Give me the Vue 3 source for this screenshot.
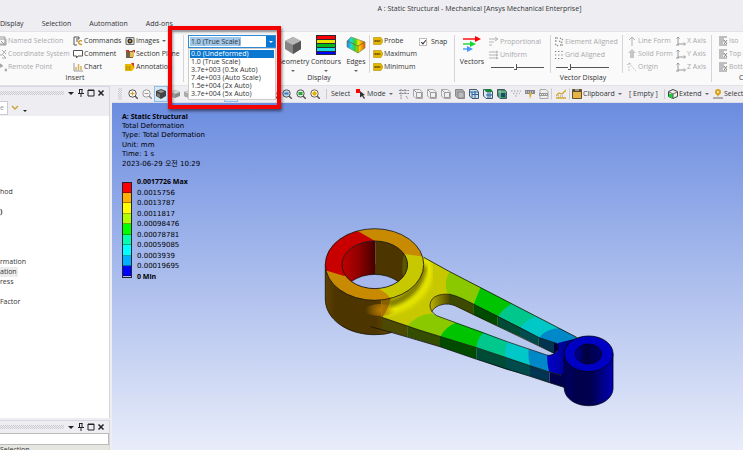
<script setup>
import { ref } from 'vue'

const scale = ref('1.0 (True Scale)')
const snap = ref(true)
const vectorLength = ref(46)
const gridSize = ref(24)

const tabs = ['Display', 'Selection', 'Automation', 'Add-ons']
const scaleOptions = [
  '0.0 (Undeformed)',
  '1.0 (True Scale)',
  '3.7e+003 (0.5x Auto)',
  '7.4e+003 (Auto Scale)',
  '1.5e+004 (2x Auto)',
  '3.7e+004 (5x Auto)',
]
const insertColumns = [
  { cls: 'c-names', items: [
    { icon: 'i-named', text: 'Named Selection', off: true },
    { icon: 'i-coord', text: 'Coordinate System', off: true },
    { icon: 'i-remote', text: 'Remote Point', off: true },
  ] },
  { cls: 'c-commands', items: [
    { icon: 'i-commands', text: 'Commands' },
    { icon: 'i-comment', text: 'Comment' },
    { icon: 'i-bars', text: 'Chart' },
  ] },
  { cls: 'c-images', items: [
    { icon: 'i-camera', text: 'Images', drop: true },
    { icon: 'i-section', text: 'Section Plane' },
    { icon: 'i-note', text: 'Annotation' },
  ] },
]
const bigButtons = [
  { icon: 'i-geometry', text: 'Geometry' },
  { icon: 'i-contours', text: 'Contours' },
  { icon: 'i-edges', text: 'Edges' },
]
const probes = [
  { icon: 'i-probe', text: 'Probe' },
  { icon: 'i-probe', text: 'Maximum' },
  { icon: 'i-probe', text: 'Minimum' },
]
const forms = [
  { icon: 'i-line', text: 'Line Form' },
  { icon: 'i-solid', text: 'Solid Form' },
  { icon: 'i-origin', text: 'Origin' },
]
const axes = [
  { icon: 'i-axis', text: 'X Axis' },
  { icon: 'i-axis', text: 'Y Axis' },
  { icon: 'i-axis', text: 'Z Axis' },
]
const views = [
  { icon: 'i-view', text: 'Iso' },
  { icon: 'i-view', text: 'Top' },
  { icon: 'i-view', text: 'Bottom' },
]
const viewTools = [
  { icon: 'i-zoomin' }, { icon: 'i-zoomout' }, { icon: 'i-cube-dark', on: true }, { icon: 'i-cube-grey' },
  { icon: 'i-cube-grey' }, { icon: 'i-cube-grey' }, { icon: 'i-cube-grey' }, { icon: 'i-zoomout', on: true },
  { icon: 'i-zoomout' }, { icon: 'i-zoomin' }, { icon: 'i-zoomin' },
  { icon: 'i-zoomfit' }, { icon: 'i-zoomgreen' }, { icon: 'i-zoomsel' },
]
const filters = [
  'i-filter', 'i-wire', 'i-wire', 'i-wire', 'i-wirefill', 'i-mesh', 'i-meshtop', 'i-meshfull',
  'i-dots', 'i-tag', 'i-label',
]
const outline = [
  { text: 'hod' }, { text: '' }, { text: ')', bold: true }, { text: '' }, { text: '' }, { text: '' }, { text: '' },
  { text: 'rmation' }, { text: 'ation', on: true }, { text: 'ress' }, { text: '' }, { text: 'Factor' },
]
const info = ['Total Deformation', 'Type: Total Deformation', 'Unit: mm', 'Time: 1 s', '2023-06-29 오전 10:29']
const colours = ['red', 'orange', 'yellow', 'lime', 'green', 'teal', 'cyan', 'sky', 'blue']
const values = [
  '0.0017726 Max', '0.0015756', '0.0013787', '0.0011817', '0.00098476',
  '0.00078781', '0.00059085', '0.0003939', '0.00019695', '0 Min',
]
</script>

<template>
  <div class="app">
    <svg class="sprite" aria-hidden="true">
      <symbol id="i-named" viewBox="0 0 10 10"><path d="M1 1h7v7H1zM3 3h5M2 9h7V3M4 5l4 4" fill="none" stroke="#999" /></symbol>
      <symbol id="i-coord" viewBox="0 0 10 10"><path d="M2 1v5l-2 3M2 6h3M5 1l4 4M9 1L5 6M5 9h4M6 6l3 3" fill="none" stroke="#aaa" /></symbol>
      <symbol id="i-remote" viewBox="0 0 10 10"><path d="M0 2h4v3H0zM4 2l2 2-4 2M8 7h2v2H8z" fill="#aaa" stroke="#aaa" stroke-width=".6" /></symbol>
      <symbol id="i-commands" viewBox="0 0 10 10"><path d="M1 1h5M1 1v8h3M3 3h3M3 5h2M6 1v2" fill="none" stroke="#555" /><path d="M9 5C5 3 4 9 9 8.500" fill="none" stroke="#c99a2c" stroke-width="1.4" /></symbol>
      <symbol id="i-comment" viewBox="0 0 10 10"><path d="M.5 1.500h9v5.500H5L3.500 9V7h-3z" fill="#fff" stroke="#555" /></symbol>
      <symbol id="i-bars" viewBox="0 0 10 10"><path d="M1 1v8h9" fill="none" stroke="#999" /><path d="M3 5v3M5.500 2v6M8 4v4" stroke="#d8b25a" stroke-width="1.500" /></symbol>
      <symbol id="i-camera" viewBox="0 0 10 10"><path d="M1 1.500h8v7H1z" fill="#ddd" stroke="#777" /><circle cx="5" cy="5" r="2.500" fill="#333" /><circle cx="5" cy="5" r="1" fill="#d8a933" /><path d="M0 3v4M10 3v4" stroke="#b28a35" /></symbol>
      <symbol id="i-section" viewBox="0 0 10 10"><path d="M1 2h7v7H1z" fill="#7d6331" /><path d="M5 3h4v5H5z" fill="#e3bd55" /><path d="M0 1h4v3L2 2zM7 1h3v3z" fill="#d32626" /><path d="M3 4v5" stroke="#4b6790" /></symbol>
      <symbol id="i-note" viewBox="0 0 10 10"><path d="M0 2h7l3 3-3 4H0z" fill="#e9b900" /><path d="M1 5h5M1 7h5" stroke="#9b7b00" stroke-dasharray="1 .5" /><path d="M6 1h3v4z" fill="#dc2d20" /></symbol>
      <symbol id="i-geometry" viewBox="0 0 20 20"><path d="M10 2l8 4v8l-8 5-8-5V6z" fill="#858585" /><path d="M10 2l8 4-8 4-8-4z" fill="#b7b7b7" /><path d="M10 10l8-4v8l-8 5z" fill="#565656" /></symbol>
      <symbol id="i-contours" viewBox="0 0 20 20"><path d="M0 0h20v20H0z" fill="#28283a" /><path d="M1 1h18v3H1z" fill="#f00" /><path d="M1 5h18v3H1z" fill="#e9e600" /><path d="M1 9h18v3H1z" fill="#00bb18" /><path d="M1 13h18v3H1z" fill="#17dce3" /><path d="M1 17h18v2H1z" fill="#00f" /></symbol>
      <symbol id="i-edges" viewBox="0 0 20 20">
        <defs><linearGradient id="edgeFill"><stop stop-color="#2075ed" /><stop offset=".22" stop-color="#18dbe0" /><stop offset=".45" stop-color="#36ce2a" /><stop offset=".65" stop-color="#f2e600" /><stop offset="1" stop-color="#f34a10" /></linearGradient></defs>
        <path d="M5 2l14 5v6l-7 5L1 12V6z" fill="url(#edgeFill)" stroke="#7b8b55" stroke-width=".7" /><path d="M1 6l11 5 7-4M12 11v7" fill="none" stroke="#7b6b20" stroke-width=".8" />
      </symbol>
      <symbol id="i-probe" viewBox="0 0 10 10"><path d="M.5 1.500h7.500L10 5 8 8.500H.5z" fill="#e5b700" stroke="#b28d00" stroke-width=".6" /><path d="M1.500 5h6" stroke="#664f00" stroke-width="2" stroke-dasharray="1.300 .6" /></symbol>
      <symbol id="i-vectors" viewBox="0 0 20 20"><path d="M1 4h13" stroke="#f00" stroke-width="1.400" /><path d="M13 1l6 3-6 3z" fill="#f00" /><path d="M1 9h8" stroke="#18d735" stroke-width="1.400" /><path d="M8 6l6 3-6 3z" fill="#18d735" /><path d="M1 14h5" stroke="#4498ff" stroke-width="1.400" /><path d="M5 11l6 3-6 3z" fill="#4498ff" /></symbol>
      <symbol id="i-prop" viewBox="0 0 10 10"><path d="M0 2h8M0 5h5M0 8h3M6 0l3 2-3 2" fill="none" stroke="#b4b4b4" /></symbol>
      <symbol id="i-uniform" viewBox="0 0 10 10"><path d="M0 2h8M0 5h8M0 8h8M7 1l2 1-2 1M7 4l2 1-2 1M7 7l2 1-2 1" fill="none" stroke="#b4b4b4" /></symbol>
      <symbol id="i-element" viewBox="0 0 10 10"><path d="M1 1h3M6 1l3 2M1 4h2M5 4l4 2M1 7l3 2M6 8h3" stroke="#888" stroke-width="1.300" stroke-dasharray="1.500 .7" /></symbol>
      <symbol id="i-grid" viewBox="0 0 10 10"><path d="M1 1.500h8M1 5h8M1 8.500h8" stroke="#777" stroke-width="1.200" stroke-dasharray="1.200 2" /></symbol>
      <symbol id="i-line" viewBox="0 0 10 10"><path d="M5 10V1M2 4l3-3 3 3" fill="none" stroke="#b0b0b0" /></symbol>
      <symbol id="i-solid" viewBox="0 0 10 10"><path d="M5 0l4 4H7v5H3V4H1z" fill="#c6c6c6" /></symbol>
      <symbol id="i-origin" viewBox="0 0 10 10"><path d="M2 9V1M2 1l7 8M0 3l2-2 2 1" fill="none" stroke="#c4c4c4" stroke-dasharray="2 1" /></symbol>
      <symbol id="i-axis" viewBox="0 0 10 10"><path d="M2 9V1M.5 2.500L2 1l1.500 1.500M2 8h7M8 6.500L9.500 8 8 9.500M0 9h3" fill="none" stroke="#999" /></symbol>
      <symbol id="i-view" viewBox="0 0 10 10"><path d="M1 1h8M1 3h5M1 5h5M1 7h4M1 9h8M6 4l3 4M9 4L6 8" stroke="#777" stroke-width=".9" /></symbol>
      <symbol id="i-zoomin" viewBox="0 0 10 10"><circle cx="4.500" cy="4.500" r="3.700" fill="#faf6ed" stroke="#555" /><path d="M7 7l3 3" stroke="#555" stroke-width="1.500" /><path d="M2.500 4.500h4M4.500 2.500v4" stroke="#d09b17" /></symbol>
      <symbol id="i-zoomout" viewBox="0 0 10 10"><circle cx="4.500" cy="4.500" r="3.700" fill="#f7f7f7" stroke="#999" /><path d="M7 7l3 3" stroke="#888" stroke-width="1.300" /><path d="M2.500 4.500h4" stroke="#999" /></symbol>
      <symbol id="i-zoomfit" viewBox="0 0 10 10"><circle cx="4.500" cy="4.500" r="3.700" fill="#bdd6ee" stroke="#555" /><path d="M7 7l3 3" stroke="#555" stroke-width="1.500" /><path d="M2.500 3.500h4v2h-4z" fill="#3d78b6" /></symbol>
      <symbol id="i-zoomgreen" viewBox="0 0 10 10"><circle cx="4.500" cy="4.500" r="3.700" fill="#d5eed8" stroke="#555" /><path d="M7 7l3 3" stroke="#555" stroke-width="1.500" /><path d="M2.500 3h4v3h-4z" fill="#2aa63b" /></symbol>
      <symbol id="i-zoomsel" viewBox="0 0 10 10"><circle cx="4.500" cy="4.500" r="3.700" fill="#fff4c9" stroke="#666" /><path d="M7 7l3 3" stroke="#555" stroke-width="1.500" /><path d="M4.500 2L7 4.500 4.500 7 2 4.500z" fill="#e4ad00" /></symbol>
      <symbol id="i-cube-dark" viewBox="0 0 10 10"><path d="M5 0l5 2v5l-5 3-5-3V2z" fill="#444" /><path d="M5 1l3.500 1.500L5 4 1.500 2.500z" fill="#999" /><path d="M1 4l3 1.500v3L1 7z" fill="#777" /></symbol>
      <symbol id="i-cube-grey" viewBox="0 0 10 10"><path d="M5 1l5 2v4L5 9 0 7V3z" fill="#888" /><path d="M5 1l5 2-5 2-5-2z" fill="#d4d4d4" /><path d="M0 3l5 2v4L0 7z" fill="#aaa" /></symbol>
      <symbol id="i-mode" viewBox="0 0 10 10"><path d="M0 0h4v4H0z" fill="#f00" /><path d="M4 2l5 4-2 .5L9 9l-1 1-2-3-2 1.500z" fill="#333" /></symbol>
      <symbol id="i-filter" viewBox="0 0 10 10"><path d="M0 1.500h10M0 4.500h10M2 0v10M6 0v5M7 7l2 3" fill="none" stroke="#888" stroke-dasharray="2 .8" /></symbol>
      <symbol id="i-wire" viewBox="0 0 10 10"><path d="M.5.5h6L9.500 3v6.500H3L.5 7z" fill="#f0f0f0" stroke="#aaa" /><path d="M3.500 3.500h5v5h-5zM1 1l2.500 2.500" fill="none" stroke="#999" /></symbol>
      <symbol id="i-wirefill" viewBox="0 0 10 10"><path d="M.5.5h7L9.500 3v6.500H3L.5 7z" fill="#aaa" stroke="#888" /><path d="M3 3h6v6H3z" fill="#bbb" stroke="#888" /></symbol>
      <symbol id="i-mesh" viewBox="0 0 10 10"><path d="M.5.5h7L9.500 3v6.500H3L.5 7z" fill="#cfe1ef" stroke="#456" /><path d="M3 3h6M3 5.500h6M3 3v6M6 2v7M1 3h2" stroke="#2865a0" /></symbol>
      <symbol id="i-meshtop" viewBox="0 0 10 10"><path d="M.5.5h7L9.500 3v6.500H3L.5 7z" fill="#dde9ef" stroke="#456" /><path d="M1 0h7l2 3H3z" fill="#16833a" /><path d="M3 6h6M5 3v6M7 3v6" stroke="#2865a0" /></symbol>
      <symbol id="i-meshfull" viewBox="0 0 10 10"><path d="M.5.5h7L9.500 3v6.500H3L.5 7z" fill="#3d9661" stroke="#456" /><path d="M4 4h4v4H4z" fill="#174d6b" /><path d="M1 3h8M3 1v8" stroke="#d3e1d9" stroke-width=".6" /></symbol>
      <symbol id="i-dots" viewBox="0 0 10 10"><path d="M0 2h10M2 4.500h7M4 7h2" stroke="#bbb" stroke-width="1.300" stroke-dasharray="1.500 1.500" /></symbol>
      <symbol id="i-tag" viewBox="0 0 10 10"><path d="M0 1h10v4H0z" fill="#888" /><path d="M1 3h8" stroke="#eee" stroke-dasharray="1 1" /><path d="M4 4h3L5 10z" fill="#d7a82a" /></symbol>
      <symbol id="i-label" viewBox="0 0 10 10"><path d="M1 .5h6l2 2v7H1z" fill="#eee" stroke="#aaa" /><path d="M0 4h9v3H0z" fill="#999" /><path d="M1 5.500h7" stroke="#eee" stroke-dasharray="1 1" /></symbol>
      <symbol id="i-graph" viewBox="0 0 10 10"><path d="M0 7l3-3 3 1 4-4M0 9h10" fill="none" stroke="#d4a42d" stroke-width="1.300" /><path d="M2 7h6" stroke="#888" stroke-dasharray="1 1" /></symbol>
      <symbol id="i-clip" viewBox="0 0 10 10"><path d="M.5.5h9v9h-9z" fill="#e4b542" stroke="#66532b" /><path d="M1 1h8v2H1z" fill="#594d38" /><path d="M3 1h4" stroke="#ddd" /></symbol>
      <symbol id="i-extend" viewBox="0 0 10 10"><path d="M5 .5l4.500 2v5L5 9.500l-4.500-2v-5z" fill="#eee" stroke="#444" /><path d="M1 4.500l4 1v4L1 8z" fill="#15d335" /><path d="M1 3l4 2 4-2M5 5v4" fill="none" stroke="#444" stroke-width=".8" /></symbol>
      <symbol id="i-pin" viewBox="0 0 10 10"><circle cx="5" cy="3" r="3" fill="#d8a21f" /><path d="M3 4h4L5 8z" fill="#d8a21f" /><path d="M0 9h10" stroke="#888" stroke-width="1.300" /><circle cx="5" cy="3" r="1" fill="#fff1c4" /></symbol>
    </svg>

    <header class="title">A : Static Structural - Mechanical [Ansys Mechanical Enterprise]</header>
    <nav class="tabs">
      <a v-for="t in tabs" :key="t" href="#">{{ t }}</a>
    </nav>

    <section class="ribbon">
      <div class="group insert">
        <div class="body">
          <div v-for="c in insertColumns" :key="c.cls" class="stack" :class="c.cls">
            <button v-for="i in c.items" :key="i.text" class="tool" :disabled="i.off">
              <svg class="ico"><use :href="'#' + i.icon" /></svg>{{ i.text }}<i v-if="i.drop" class="caret"></i>
            </button>
          </div>
        </div>
        <div class="caption">Insert</div>
      </div>

      <div class="group display">
        <div class="body">
          <div class="scale">
            <div class="combo">
              <input v-model="scale" aria-label="Result scale" role="combobox" aria-expanded="true" />
              <button class="open" aria-label="Show scales"><i class="caret"></i></button>
            </div>
            <ul class="options" role="listbox">
              <li v-for="(o, n) in scaleOptions" :key="o" role="option" :class="{ on: n === 0 }" @click="scale = o">{{ o }}</li>
            </ul>
            <div class="callout"></div>
          </div>
          <button v-for="b in bigButtons" :key="b.text" class="big">
            <svg class="pic"><use :href="'#' + b.icon" /></svg>
            <span>{{ b.text }}</span>
            <i class="caret"></i>
          </button>
          <div class="stack probes">
            <button v-for="p in probes" :key="p.text" class="tool"><svg class="ico"><use :href="'#' + p.icon" /></svg>{{ p.text }}</button>
          </div>
          <label class="snap"><input v-model="snap" type="checkbox" />Snap</label>
        </div>
        <div class="caption">Display</div>
      </div>

      <div class="group vector">
        <div class="body">
          <button class="big"><svg class="pic"><use href="#i-vectors" /></svg><span>Vectors</span></button>
          <div class="stack lengths">
            <button class="tool" disabled><svg class="ico"><use href="#i-prop" /></svg>Proportional</button>
            <button class="tool" disabled><svg class="ico"><use href="#i-uniform" /></svg>Uniform</button>
            <input v-model="vectorLength" type="range" aria-label="Vector length" />
          </div>
          <div class="stack aligned">
            <button class="tool" disabled><svg class="ico"><use href="#i-element" /></svg>Element Aligned</button>
            <button class="tool" disabled><svg class="ico"><use href="#i-grid" /></svg>Grid Aligned</button>
            <input v-model="gridSize" type="range" aria-label="Grid size" />
          </div>
          <div class="stack forms">
            <button v-for="f in forms" :key="f.text" class="tool" disabled><svg class="ico"><use :href="'#' + f.icon" /></svg>{{ f.text }}</button>
          </div>
          <div class="stack axes">
            <button v-for="a in axes" :key="a.text" class="tool" disabled><svg class="ico"><use :href="'#' + a.icon" /></svg>{{ a.text }}</button>
          </div>
        </div>
        <div class="caption">Vector Display</div>
      </div>

      <div class="group capped">
        <div class="body">
          <div class="stack">
            <button v-for="v in views" :key="v.text" class="tool" disabled><svg class="ico"><use :href="'#' + v.icon" /></svg>{{ v.text }}</button>
          </div>
        </div>
        <div class="caption">Capped</div>
      </div>
    </section>

    <main class="work">
      <aside class="side">
        <section class="pane tree">
          <div class="bar">
            <span class="grip"></span>
            <button aria-label="Menu"><svg viewBox="0 0 8 8"><path d="M1 3h6L4 6z" fill="#222" /></svg></button>
            <button aria-label="Pin"><svg viewBox="0 0 8 8"><path d="M2.500 0v4.500M5 0v4.500M2 .5h3.500M1 4.500h6M4 5v3" fill="none" stroke="#222" /></svg></button>
            <button aria-label="Maximize"><svg viewBox="0 0 8 8"><path d="M1 1h6v6H1zM1 1.500h6" fill="none" stroke="#222" /></svg></button>
            <button aria-label="Close"><svg viewBox="0 0 8 8"><path d="M1.500 1.500l5 5M6.500 1.500l-5 5" stroke="#222" stroke-width="1.500" /></svg></button>
          </div>
          <div class="search">
            <input aria-label="Search outline" placeholder="e" />
            <svg viewBox="0 0 8 6"><path d="M1 1l3 3 3-3" fill="none" stroke="#cda034" stroke-width="1.400" /></svg>
            <i class="caret"></i>
          </div>
          <ul class="nodes">
            <li v-for="(n, k) in outline" :key="k" :class="{ bold: n.bold }"><span :class="{ on: n.on }">{{ n.text }}</span></li>
          </ul>
        </section>
        <section class="pane details">
          <div class="bar">
            <span class="grip"></span>
            <button aria-label="Menu"><svg viewBox="0 0 8 8"><path d="M1 3h6L4 6z" fill="#222" /></svg></button>
            <button aria-label="Pin"><svg viewBox="0 0 8 8"><path d="M2.500 0v4.500M5 0v4.500M2 .5h3.500M1 4.500h6M4 5v3" fill="none" stroke="#222" /></svg></button>
            <button aria-label="Maximize"><svg viewBox="0 0 8 8"><path d="M1 1h6v6H1zM1 1.500h6" fill="none" stroke="#222" /></svg></button>
            <button aria-label="Close"><svg viewBox="0 0 8 8"><path d="M1.500 1.500l5 5M6.500 1.500l-5 5" stroke="#222" stroke-width="1.500" /></svg></button>
          </div>
          <div class="blank"></div>
          <div class="heading">Selection</div>
        </section>
      </aside>

      <section class="stage">
        <div class="toolbar">
          <span class="handle"></span>
          <div class="views">
            <button v-for="(t, k) in viewTools" :key="k" class="tb" :class="{ on: t.on }" aria-label="View"><svg class="ico"><use :href="'#' + t.icon" /></svg></button>
          </div>
          <span class="word select">Select</span>
          <button class="word mode"><svg class="ico"><use href="#i-mode" /></svg>Mode<i class="caret"></i></button>
          <div class="filters">
            <button v-for="(f, k) in filters" :key="k" class="tb" aria-label="Filter"><svg class="ico"><use :href="'#' + f" /></svg></button>
          </div>
          <button class="tb graph" aria-label="Graph"><svg class="ico"><use href="#i-graph" /></svg></button>
          <button class="word clip"><svg class="ico"><use href="#i-clip" /></svg>Clipboard<i class="caret"></i></button>
          <span class="word empty">[ Empty ]</span>
          <button class="word extend"><svg class="ico"><use href="#i-extend" /></svg>Extend<i class="caret"></i></button>
          <button class="word by"><svg class="ico"><use href="#i-pin" /></svg>Select By</button>
        </div>

        <div class="scene">
          <div class="info">
            <b>A: Static Structural</b>
            <span v-for="l in info" :key="l">{{ l }}</span>
          </div>
          <div class="legend">
            <div class="ramp"><i v-for="c in colours" :key="c" :class="c"></i></div>
            <div class="values"><span v-for="v in values" :key="v">{{ v }}</span></div>
          </div>

          <svg class="model" viewBox="320 220 300 195" role="img" aria-label="Deformed link">
            <defs>
              <clipPath id="ring"><path clip-rule="evenodd" d="M325.300 264.500a49.200 35.800 0 1 0 98.400 0a49.200 35.800 0 1 0-98.400 0zM342 264.800a32.800 23.800 0 1 0 65.600 0a32.800 23.800 0 1 0-65.600 0z" /></clipPath>
              <clipPath id="bore"><ellipse cx="374.800" cy="264.800" rx="32.800" ry="23.800" /></clipPath>
              <clipPath id="top"><path d="M381.700 317.300L420 330.300 476.700 347.700 530 365.700 549.300 372 566 377 580 338 576.700 337.300 449 271.300 423.700 257.300 380 264z" /></clipPath>
              <clipPath id="wall"><path d="M430 304.500C431 296 440 293.500 450 294.300C458 296 465 300 473.300 304L497.700 316 520 327.300 539.300 337.700 558.500 344V350L554 353.600 538.300 345.500 520 336.500 497.300 326 473.300 314.700 455 305.700C447 302.500 436 304 431.700 311.700Q429.500 308 430 304.500z" /></clipPath>
              <linearGradient id="boreRed" x1="342" x2="375" y1="0" y2="0" gradientUnits="userSpaceOnUse"><stop stop-color="#c00000" /><stop offset=".5" stop-color="#900000" /><stop offset="1" stop-color="#450000" /></linearGradient>
              <linearGradient id="drum" x1="325" x2="392" y1="0" y2="0" gradientUnits="userSpaceOnUse"><stop stop-color="#5f4200" /><stop offset=".15" stop-color="#4d3500" /><stop offset=".75" stop-color="#4d3500" /><stop offset="1" stop-color="#6c4c00" /></linearGradient>
              <linearGradient id="cap" x1="431" x2="450" y1="0" y2="0" gradientUnits="userSpaceOnUse"><stop stop-color="#b5ae00" /><stop offset="1" stop-color="#4c4700" /></linearGradient>
              <linearGradient id="pin" x1="564" x2="613" y1="0" y2="0" gradientUnits="userSpaceOnUse"><stop stop-color="#000060" /><stop offset=".3" stop-color="#00004b" /><stop offset=".55" stop-color="#000050" /><stop offset="1" stop-color="#0000b4" /></linearGradient>
              <linearGradient id="pinBore" x1="575" x2="602" y1="0" y2="0" gradientUnits="userSpaceOnUse"><stop stop-color="#000098" /><stop offset=".4" stop-color="#000040" /><stop offset="1" stop-color="#00006c" /></linearGradient>
              <linearGradient id="neck" x1="547" x2="568" y1="0" y2="0" gradientUnits="userSpaceOnUse"><stop stop-color="#0000c8" /><stop offset=".5" stop-color="#0000b4" /><stop offset="1" stop-color="#000078" /></linearGradient>
              <radialGradient id="blush" cx="380" cy="310" r="15" gradientUnits="userSpaceOnUse"><stop stop-color="#b87a00" /><stop offset="1" stop-color="#b87a00" stop-opacity="0" /></radialGradient>
              <filter id="soft"><feGaussianBlur stdDeviation="2" /></filter>
            </defs>

            <path d="M325.300 264.500V299C325.300 319 347 334.700 374.500 334.700Q385 334.700 391.700 332.500L400 300 380 265z" fill="url(#drum)" stroke="#151000" stroke-width=".8" />

            <path d="M381.700 317.300L407.500 325.500V337L382 329.500z" fill="#4c4a00" />
            <path d="M407.300 325L440 336.300V346.700L407.300 336.800z" fill="#354d00" />
            <path d="M440 336.300L476.700 347.700V359.300L440 346.700z" fill="#004b00" />
            <path d="M476.700 347.700L506 357V369.500L476.700 359.300z" fill="#004b36" />
            <path d="M506 357L530 365.500V376.300L506 369.500z" fill="#004b4b" />
            <path d="M530 365.500L549.500 372V382.700L530 376.300z" fill="#003450" />
            <path d="M549.500 372L566 376V388L549.500 382.700z" fill="#00004c" />

            <g clip-path="url(#top)">
              <path d="M370 240H590V400H370z" fill="#c8c800" />
              <path d="M425 257C436 283 418 304 388 311" fill="none" stroke="#e6e600" stroke-width="8" filter="url(#soft)" />
              <path d="M424 266C421 287 406 300 388 304" fill="none" stroke="#777300" stroke-width="6" filter="url(#soft)" />
              <path d="M372 300L391 298Q389 307 382.500 317L370 315z" fill="#8a5f00" />
              <path d="M451 270C444 280 445 286 448 295L473.300 305 481 286z" fill="#8ac800" />
              <path d="M481 286L473.300 305 497.700 317 512.500 303z" fill="#00c400" />
              <path d="M512.500 303C507 307 502 310 497.700 317L520 328 536 316.500z" fill="#00c88c" />
              <path d="M536 316.500Q526 320 520 328L539 339 559 328z" fill="#00c8c8" />
              <path d="M560 328Q545 329 539 338L558 345 578 338z" fill="#0088c8" />
              <path d="M407 326Q420 312 435 314L457 322.300 440 337z" fill="#8ac800" />
              <path d="M457 322.300Q445 327 440 337L476.700 348.500 484 332z" fill="#00c400" />
              <path d="M484 332Q476 340 476.700 348.500L505.700 358 508 341z" fill="#00c88c" />
              <path d="M508 341Q504 349 505.700 358L530 366.500 528.300 348.500z" fill="#00c8c8" />
              <path d="M528.300 348.500Q528 358 530 366.500L549.500 373 547 354z" fill="#0088c8" />
              <path d="M547 354Q547 365 549.500 373L570 379 580 337 574 339 558 343 557 352z" fill="url(#neck)" />
            </g>

            <path d="M431.700 311.700C436 304 447 302.500 455 305.700L473.300 314.700 497.300 326 520 336.500 538.300 345.500 554 353.500Q550 356 546.700 355L528.300 349 507.300 341.700 483.300 332.300 456 322.700 436.700 315.700Q433 314 431.700 311.700z" fill="#b8c7ee" />
            <g clip-path="url(#wall)">
              <path d="M429 290H450V315H429z" fill="url(#cap)" />
              <path d="M449.500 290H473.300V317H449.500z" fill="#3c4900" />
              <path d="M473.300 300H497.500V330H473.300z" fill="#004b00" />
              <path d="M497.500 310H520V340H497.500z" fill="#004b36" />
              <path d="M520 320H538.500V348H520z" fill="#004b4b" />
              <path d="M538.500 330H554V356H538.500z" fill="#003450" />
              <path d="M554 340H560V356H554z" fill="#000040" />
            </g>
            <path d="M430 304.500C431 296 440 293.500 450 294.300C458 296 465 300 473.300 304L539.300 337.700 557 343.500Q560 350 553.300 354.300Q550 356 546.700 355L507.300 341.700 436.700 315.700Q429.500 311 430 304.500M431.700 311.700C436 304 447 302.500 455 305.700L554 353.300" fill="none" stroke="#111" stroke-width=".7" />
            <path d="M423.700 257.300L449 271.300 576.700 337.300M381.700 317.300L420 330.300 476.700 347.700 530 365.700 549.300 372 564.300 376M370.700 326.700L391.700 332.500 440 346.700 476.700 359.300 530 376.300 566 388" fill="none" stroke="#111" stroke-width=".8" />
            <ellipse cx="380" cy="310" rx="15" ry="6" fill="url(#blush)" />

            <g clip-path="url(#ring)">
              <path d="M320 225H430V305H320z" fill="#c88a00" />
              <path d="M357.700 231L375 241 365 265 344.300 276 326 270.500 315 270V220z" fill="#c80000" />
              <path d="M425 257L405 254 380 265 378.300 288.700Q388 293 391 300L430 305z" fill="#c8c800" />
            </g>
            <g clip-path="url(#bore)">
              <path d="M340 240H375.300V290H340z" fill="url(#boreRed)" />
              <path d="M375.300 240H410V290H375.300z" fill="#4d3500" />
              <path d="M405 250Q400 266 404 282H412V250z" fill="#5a5700" />
              <ellipse cx="374.800" cy="298.200" rx="32.800" ry="23.800" fill="#a7b9ec" stroke="#111" stroke-width=".7" />
            </g>
            <ellipse cx="374.500" cy="264.500" rx="49.200" ry="35.800" fill="none" stroke="#111" stroke-width=".8" />
            <ellipse cx="374.800" cy="264.800" rx="32.800" ry="23.800" fill="none" stroke="#111" stroke-width=".8" />

            <path d="M564.300 353.800V388C564.300 398 575 405.700 588.700 405.700S613 398 613 388V353.800z" fill="url(#pin)" stroke="#00001c" stroke-width=".8" />
            <path d="M560 376L566 372V387L560 385z" fill="#00004c" />
            <ellipse cx="588.700" cy="353.800" rx="24.400" ry="17.800" fill="#0000c4" stroke="#00001c" stroke-width=".8" />
            <ellipse cx="588.500" cy="354" rx="13.200" ry="10" fill="url(#pinBore)" stroke="#00001c" stroke-width=".8" />
          </svg>
        </div>
      </section>
    </main>
  </div>
</template>

<style>
body { margin: 0; }
</style>

<style scoped>
.app { height: 100vh; overflow: hidden; display: flex; flex-direction: column; background: #eeeef2; color: #333; font: 7px/10px "Open Sans", "Noto Sans", "Noto Sans CJK KR", sans-serif; white-space: nowrap; }
.app * { box-sizing: border-box; }
.sprite { position: absolute; width: 0; height: 0; }
button, input { font: inherit; color: inherit; border: 0; background: none; padding: 0; margin: 0; }
ul { list-style: none; margin: 0; padding: 0; }
svg { display: block; flex: none; }
.ico { width: 10px; height: 10px; }
.caret { display: inline-block; flex: none; border: 2px solid transparent; border-top-color: #666; border-bottom: 0; }

.title { height: 18px; padding: 4px 0 0 216px; text-align: center; }
.tabs { height: 13px; display: flex; gap: 18px; }
.tabs a { color: inherit; text-decoration: none; line-height: 12px; }

.ribbon { height: 55px; flex: none; display: flex; padding: 3px 0; background: #fafafa; border-top: 1px solid #e3e3e6; border-bottom: 1px solid #e3e3e6; }
.group { flex: none; display: flex; flex-direction: column; position: relative; }
.group + .group { border-left: 1px solid #d6d6da; }
.body { display: flex; height: 38px; }
.caption { text-align: center; line-height: 10px; }
.stack { display: flex; flex-direction: column; align-items: flex-start; flex: none; }
.tool { display: flex; align-items: center; gap: 1px; height: 13px; }
.tool .caret { margin-left: 2px; }
.tool:disabled { color: #a9a9ac; }
.insert { width: 216px; margin-left: -33px; }
.insert .body { padding-left: 30px; }
.c-names { width: 76px; }
.c-commands { width: 52px; }
.display { width: 271px; }
.scale { position: relative; width: 88px; margin: 0 1px 0 4px; flex: none; z-index: 5; }
.combo { display: flex; height: 13px; border: 1px solid #2d8ad8; background: #fff; }
.combo input { flex: none; width: 51px; height: 9px; margin: 1px; padding-left: 1px; background: #9fc7ea; }
.combo .open { margin-left: auto; width: 9px; background: #0a78d0; display: flex; align-items: center; justify-content: center; }
.combo .open .caret { border-top-color: #fff; }
.options { position: absolute; top: 13px; left: 0; right: 0; padding: 1px; background: #fff; border: 1px solid #ccc; }
.options li { line-height: 8px; padding-left: 1px; }
.options li.on { background: #0a78d0; color: #fff; }
.callout { position: absolute; left: -20px; top: -9px; width: 113px; height: 83px; border: 4px solid #f50000; box-shadow: 1px 2px 3px #0008, inset 1px 2px 3px #0006; pointer-events: none; }
.big { width: 34px; flex: none; display: flex; flex-direction: column; align-items: center; }
.big .pic { width: 20px; height: 20px; margin-bottom: 2px; }
.big .caret { margin-top: 3px; }
.display .big:nth-child(2) { width: 32px; }
.display .big:nth-child(4) { width: 26px; }
.probes { width: 50px; border-left: 1px solid #d6d6da; padding-left: 3px; }
.snap { display: flex; align-items: center; gap: 4px; height: 13px; }
.snap input { appearance: none; width: 8px; height: 8px; border: 1px solid #bbb; background: #fff; display: grid; place-items: center; }
.snap input:checked::after { content: ""; width: 2px; height: 4px; border: solid #333; border-width: 0 1px 1px 0; transform: rotate(40deg); }
.vector { width: 257px; }
.lengths { width: 61px; }
.aligned { width: 72px; border-left: 1px solid #d6d6da; padding-left: 3px; }
.forms { width: 54px; border-left: 1px solid #d6d6da; padding-left: 4px; }
input[type="range"] { appearance: none; width: 53px; height: 12px; margin-left: 2px; background: linear-gradient(#555, #555) center / 100% 1px no-repeat; }
input[type="range"]::-webkit-slider-thumb { appearance: none; width: 3px; height: 6px; background: #fafafa; border: solid #555; border-width: 0 1px 1px 0; }
.capped { width: 80px; }
.capped .body { padding-left: 6px; }

.work { flex: 1; min-height: 0; display: flex; }
.side { width: 112px; flex: none; padding-right: 2px; display: flex; flex-direction: column; gap: 2px; }
.pane { border-right: 1px solid #d5d5dc; border-top: 1px solid #d5d5e4; overflow: hidden; }
.tree { flex: 1; min-height: 0; background: #fff; }
.bar { height: 12px; display: flex; align-items: center; gap: 2px; background: #eeeef2; padding-right: 4px; }
.bar svg { width: 8px; height: 8px; }
.grip { flex: 1; height: 4px; margin-right: 1px; background: repeating-conic-gradient(#ccc 0 25%, #eeeef2 0 50%) 0 0 / 2px 2px; }
.search { height: 17px; display: flex; align-items: center; background: #eeeef2; }
.search input { width: 8px; height: 14px; background: #fff; border: 1px solid #ccc; border-left: 0; }
.search input::placeholder { color: #999; opacity: 1; }
.search svg { width: 8px; height: 6px; margin: 0 4px 0 3px; }
.search .caret { border-top-color: #222; align-self: flex-end; margin-bottom: 4px; }
.nodes { padding-top: 71px; }
.nodes li { height: 10px; line-height: 10px; }
.nodes .on { display: inline-block; background: #ececec; padding-right: 1px; }
.bold { font-weight: 700; }
.details { flex: none; height: 30px; }
.blank { height: 12px; background: #fff; border: 1px solid #bbb; border-left: 0; }
.heading { background: #e6e6e1; line-height: 10px; }

.stage { flex: 1; min-width: 0; display: flex; flex-direction: column; }
.toolbar { height: 17px; flex: none; display: flex; align-items: center; overflow: hidden; border-bottom: 1px solid #dcdce4; }
.handle { flex: none; width: 4px; height: 12px; margin: 0 4px 0 6px; background: repeating-conic-gradient(#ccc 0 25%, #eeeef2 0 50%) 0 0 / 2px 2px; }
.views, .filters { display: flex; flex: none; }
.tb { flex: none; width: 14px; height: 16px; display: grid; place-items: center; border: 1px solid transparent; }
.tb.on { background: #d7e8f7; border-color: #8fbde8; }
.word { flex: none; display: flex; align-items: center; gap: 1px; }
.word .caret { margin-left: 2px; }
.select { width: 30px; margin-left: 4px; border-left: 1px solid #ccc; padding-left: 4px; }
.mode { width: 41px; }
.graph { width: 19px; border-left-color: #ccc; border-right-color: #ccc; height: 12px; }
.clip { width: 59px; padding-left: 2px; }
.empty { width: 35px; }
.extend { width: 49px; border-left: 1px solid #ccc; padding-left: 3px; }

.scene { flex: 1; min-height: 0; position: relative; overflow: hidden; padding: 9px 10px; color: #000; background: linear-gradient(#6b8cdf, #e9edfa); font-family: "DejaVu Sans", "Noto Sans CJK KR", sans-serif; }
.info { display: grid; grid-auto-rows: 1fr; height: 57px; align-items: center; line-height: 9px; }
.info b, .values span:first-child, .values span:last-child { font-family: "Open Sans", sans-serif; font-weight: 700; }
.legend { display: flex; align-items: center; gap: 5px; margin-top: 8px; }
.ramp { width: 10px; height: 96px; display: flex; flex-direction: column; border: 1px solid #223; }
.ramp i { flex: 1; border-bottom: 1px solid #0005; }
.values { height: 105px; display: grid; grid-auto-rows: 1fr; align-items: center; line-height: 10px; }
.red { background: #f00; }
.orange { background: #ffb000; }
.yellow { background: #ff0; }
.lime { background: #b0ff00; }
.green { background: #0f0; }
.teal { background: #00ffb0; }
.cyan { background: #0ff; }
.sky { background: #00b0ff; }
.blue { background: #00f; }
.model { position: absolute; left: 208px; top: 117px; width: 300px; height: 195px; }
</style>
